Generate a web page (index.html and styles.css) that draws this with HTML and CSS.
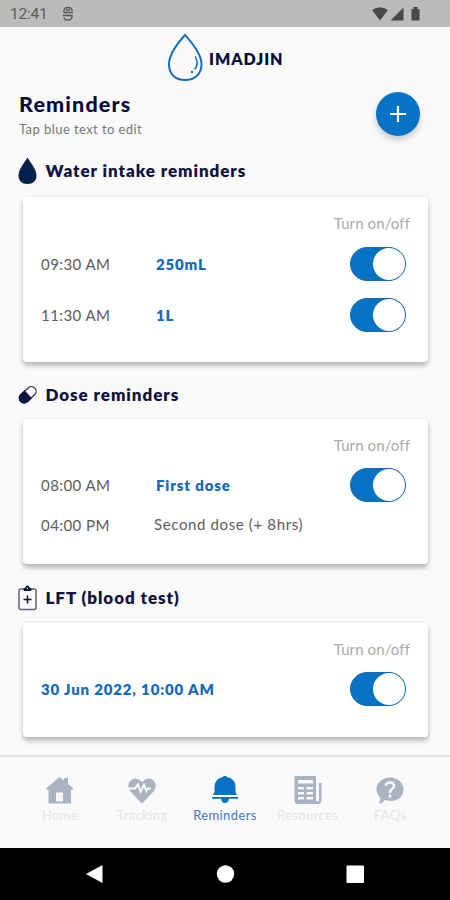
FILE: index.html
```html
<!DOCTYPE html>
<html lang="en">
<head>
<meta charset="utf-8">
<title>Reminders</title>
<link rel="stylesheet" href="styles.css">
</head>
<body>
<header class="status">
  <span class="clock">12:41</span>
  <svg class="sync" width="12" height="16" viewBox="0 0 12 16" fill="none" stroke="#555" stroke-width="1.3"><path d="M10 5V4.500Q10 1.500 6 1.500T2 4.500V6.500H11M1 9.500H10V10.500Q10 14 6 14T2 11.500M4 4H8"/></svg>
  <svg class="signals" width="50" height="16" viewBox="0 0 50 16" fill="#484848"><path d="M0 4Q8 -1.500 16 4L8 14.500Z"/><path d="M31.500 1.500V14.500H18.500Z"/><path d="M39.500 3H41.500V1H45.500V3H47.500V14.500H39.500Z"/></svg>
</header>
<main>
  <div class="brand">
    <svg width="36" height="50" viewBox="0 0 36 50" fill="none" stroke="#1670b8" stroke-width="2" stroke-linecap="round"><path d="M18 2C13.500 7 2 20 2 31C2 41 8 47 18 47S34.500 41 34.500 31C34.500 20 22.500 7 18 2Z"/><path d="M28.500 24Q32 31 28 36" stroke-width="1.500"/><circle cx="25" cy="39" r=".6" stroke-width="1.200"/></svg>
    <span class="brand-name">IMADJIN</span>
  </div>
  <div class="title-row">
    <div>
      <h1>Reminders</h1>
      <p class="hint">Tap blue text to edit</p>
    </div>
    <button class="add" aria-label="Add"><svg width="18" height="18" viewBox="0 0 18 18" stroke="#fff" stroke-width="2.200"><path d="M9 1V17M1 9H17"/></svg></button>
  </div>

  <h2 class="first"><svg width="20" height="28" viewBox="0 0 20 28" fill="#06204d"><path d="M9.500 .500C7 5 .500 12 .500 18.500C.500 24 4 27 9.500 27S18.500 24 18.500 18.500C18.500 12 12 5 9.500 .500Z"/></svg><span>Water intake reminders</span></h2>
  <section class="card water">
    <div class="label">Turn on/off</div>
    <div class="row"><span class="time">09:30 AM</span><b>250mL</b><i class="switch"></i></div>
    <div class="row"><span class="time">11:30 AM</span><b>1L</b><i class="switch"></i></div>
  </section>

  <h2 class="second"><svg width="20" height="20" viewBox="0 0 20 20"><g transform="rotate(-43 9.500 10)"><rect x="0" y="5.300" width="19.500" height="9.400" rx="4.700" fill="#fafafa" stroke="#333a5c" stroke-width="1.300"/><path d="M10.500 4.500H5A5.500 5.500 0 0 0 5 15.500H10.500Z" fill="#0a1640"/></g></svg><span>Dose reminders</span></h2>
  <section class="card dose">
    <div class="label">Turn on/off</div>
    <div class="row"><span class="time">08:00 AM</span><b>First dose</b><i class="switch"></i></div>
    <div class="row short"><span class="time">04:00 PM</span><span class="plain">Second dose (+ 8hrs)</span></div>
  </section>

  <h2 class="third"><svg width="20" height="26" viewBox="0 0 20 26" fill="none" stroke="#0a1640"><rect x="1" y="4" width="17" height="20.500" rx="2" stroke="#626371" stroke-width="1.500"/><path d="M9.500 10.500V18.500M5.500 14.500H13.500" stroke-width="1.600"/><path d="M6 5.500V3.500H7.500Q7.500 1 9.500 1T11.500 3.500H13V5.500Z" fill="#0a1640"/><circle cx="9.500" cy="3.300" r=".7" fill="#fff" stroke="none"/></svg><span>LFT (blood test)</span></h2>
  <section class="card blood">
    <div class="label">Turn on/off</div>
    <div class="row"><b>30 Jun 2022, 10:00 AM</b><i class="switch"></i></div>
  </section>
</main>
<nav class="tabs">
  <a><svg width="28" height="28" viewBox="0 0 28 28" fill="#a9b3c1"><path fill-rule="evenodd" d="M0 12.500L13.500 1L18 4.800V2H22V8L27.500 12.500L26 14L25 13.300V27.500H2.500V13.300L1.500 14ZM10 16.500V25.500H17V16.500Z"/></svg><span>Home</span></a>
  <a><svg width="28" height="28" viewBox="0 0 28 28"><path d="M14 27.500L2.500 15.500Q-2 9 2.500 4.500Q8 0 14 6Q20 0 25.500 4.500Q30 9 25.500 15.500Z" fill="#a9b3c1"/><path d="M1 12.500H7L10 8.500L12.500 16L16 9L18.500 15L20 12.500H23" fill="none" stroke="#fafafa" stroke-width="2"/></svg><span>Tracking</span></a>
  <a class="active"><svg width="28" height="28" viewBox="0 0 28 28" fill="#0872c4"><path d="M12 1Q14 -2 16 1Q24.500 3 24.500 10.500V16L26 19H2L3.500 16V10.500Q3.500 3 12 1ZM1 21H27V22.800H18Q17.500 27 14 27T10 22.800H1Z"/></svg><span>Reminders</span></a>
  <a><svg width="28" height="28" viewBox="0 0 28 28"><path d="M1 0H22V24Q22 25.500 23.500 25.500T25 24V7H27.500V24Q27.500 28 23 28H4Q.500 28 .500 24V0Z" fill="#a9b3c1"/><path d="M4 4H19V7.500H4ZM4 11H10V13.500H4ZM12.500 11H19V13.500H12.500ZM4 16H10V18.500H4ZM12.500 16H19V18.500H12.500ZM4 21H10V23.500H4ZM12.500 21H19V23.500H12.500Z" fill="#fafafa"/></svg><span>Resources</span></a>
  <a><svg width="28" height="28" viewBox="0 0 28 28"><path d="M14 1.500C22 1.500 27.500 6.500 27.500 13.500S22 25 14 25L9 24Q7 27 3 28L4.500 22Q.500 18.500 .500 13.500C.500 6.500 6 1.500 14 1.500Z" fill="#a9b3c1"/><path d="M10 10Q10 6.500 14 6.500T18 10Q18 12 15.500 13.500Q14 14.500 14 17M14 18.500V21.500" fill="none" stroke="#fafafa" stroke-width="2.500"/></svg><span>FAQs</span></a>
</nav>
<footer class="system">
  <svg width="450" height="52" viewBox="0 0 450 52" fill="#fff"><path d="M86 26L102.500 17V35Z"/><circle cx="225.500" cy="26" r="8.700"/><rect x="346.500" y="17.500" width="17.500" height="17.500" rx="1"/></svg>
</footer>
</body>
</html>
```
FILE: styles.css
```css
* { box-sizing: border-box; }
body { margin: 0; width: 450px; height: 900px; display: flex; flex-direction: column; background: #fafafa; color: #5c5c5c; font-family: Lato, "Liberation Sans", sans-serif; overflow: hidden; white-space: nowrap; }
h1, h2, p { margin: 0; }
svg { display: block; flex: none; }
.status { height: 27px; flex: none; background: #bbb; display: flex; align-items: center; padding: 1px 28px 0 10px; color: #5c5c5c; font: 15.5px Roboto, sans-serif; }
.clock { width: 52px; letter-spacing: -.2px; }
.signals { margin-left: auto; }
main { flex: none; height: 728px; }
.brand { height: 62px; display: flex; align-items: center; gap: 6.5px; padding: 0 0 1px 166.5px; }
.brand-name { font-size: 16px; font-weight: 800; color: #060a43; letter-spacing: .95px; padding-top: 1px; }
.title-row { height: 56px; display: flex; justify-content: space-between; padding: 3px 30.5px 0 19px; }
h1 { font-size: 21.5px; line-height: 26px; font-weight: 900; color: #060a43; letter-spacing: 1.15px; margin-top: -1px; }
.hint { font-size: 13px; line-height: 20px; margin-top: 2px; color: #777; letter-spacing: .43px; }
.add { width: 44px; height: 44px; border: 0; border-radius: 50%; padding: 0; display: grid; place-items: center; background: #0872c4; box-shadow: 0 4px 6px rgba(0, 0, 0, .2); }
h2 { display: flex; align-items: center; gap: 7.5px; padding-left: 18px; font-size: 17px; font-weight: 800; color: #10123f; letter-spacing: .94px; }
h2 span { padding-bottom: 1px; }
.first { height: 52px; }
.second { height: 57px; padding-top: 9px; }
.third { height: 59px; padding-top: 9px; }
.card { width: 405px; margin-left: 23px; padding: 9px 18px 0; border-radius: 4px; background: #fff; box-shadow: 0 4px 5px rgba(0, 0, 0, .24), 0 0 5px rgba(0, 0, 0, .06); }
.water { height: 165px; }
.dose { height: 145px; }
.blood { height: 114px; }
.label { height: 32px; line-height: 34px; text-align: right; font-size: 15px; color: #aaa; letter-spacing: .1px; }
.row { height: 51px; display: flex; align-items: center; padding-right: 4px; font-size: 15px; }
.dose .row, .blood .row { height: 49px; }
.dose .short { height: 32px; }
.time { width: 115px; letter-spacing: .43px; }
.plain { margin: -3px 0 0 -2px; letter-spacing: .63px; }
b { color: #1769ba; font-weight: 800; letter-spacing: .84px; }
.switch { width: 56px; height: 34px; margin-left: auto; border: 1px solid #1769b4; border-radius: 17px; background: #0872c4; display: flex; justify-content: flex-end; }
.switch::before { content: ""; width: 32px; height: 32px; border-radius: 50%; background: #fff; }
.tabs { height: 93px; flex: none; border-top: 2px solid #dfe1e3; display: flex; padding: 19px 18.5px 0; }
.tabs a { width: 82.6px; display: flex; flex-direction: column; align-items: center; font-size: 13px; line-height: 18px; color: #e4e6e9; gap: 1.5px; letter-spacing: .4px; }
.tabs .active { color: #4477c0; }
.system { height: 52px; flex: none; background: #000; }
```
